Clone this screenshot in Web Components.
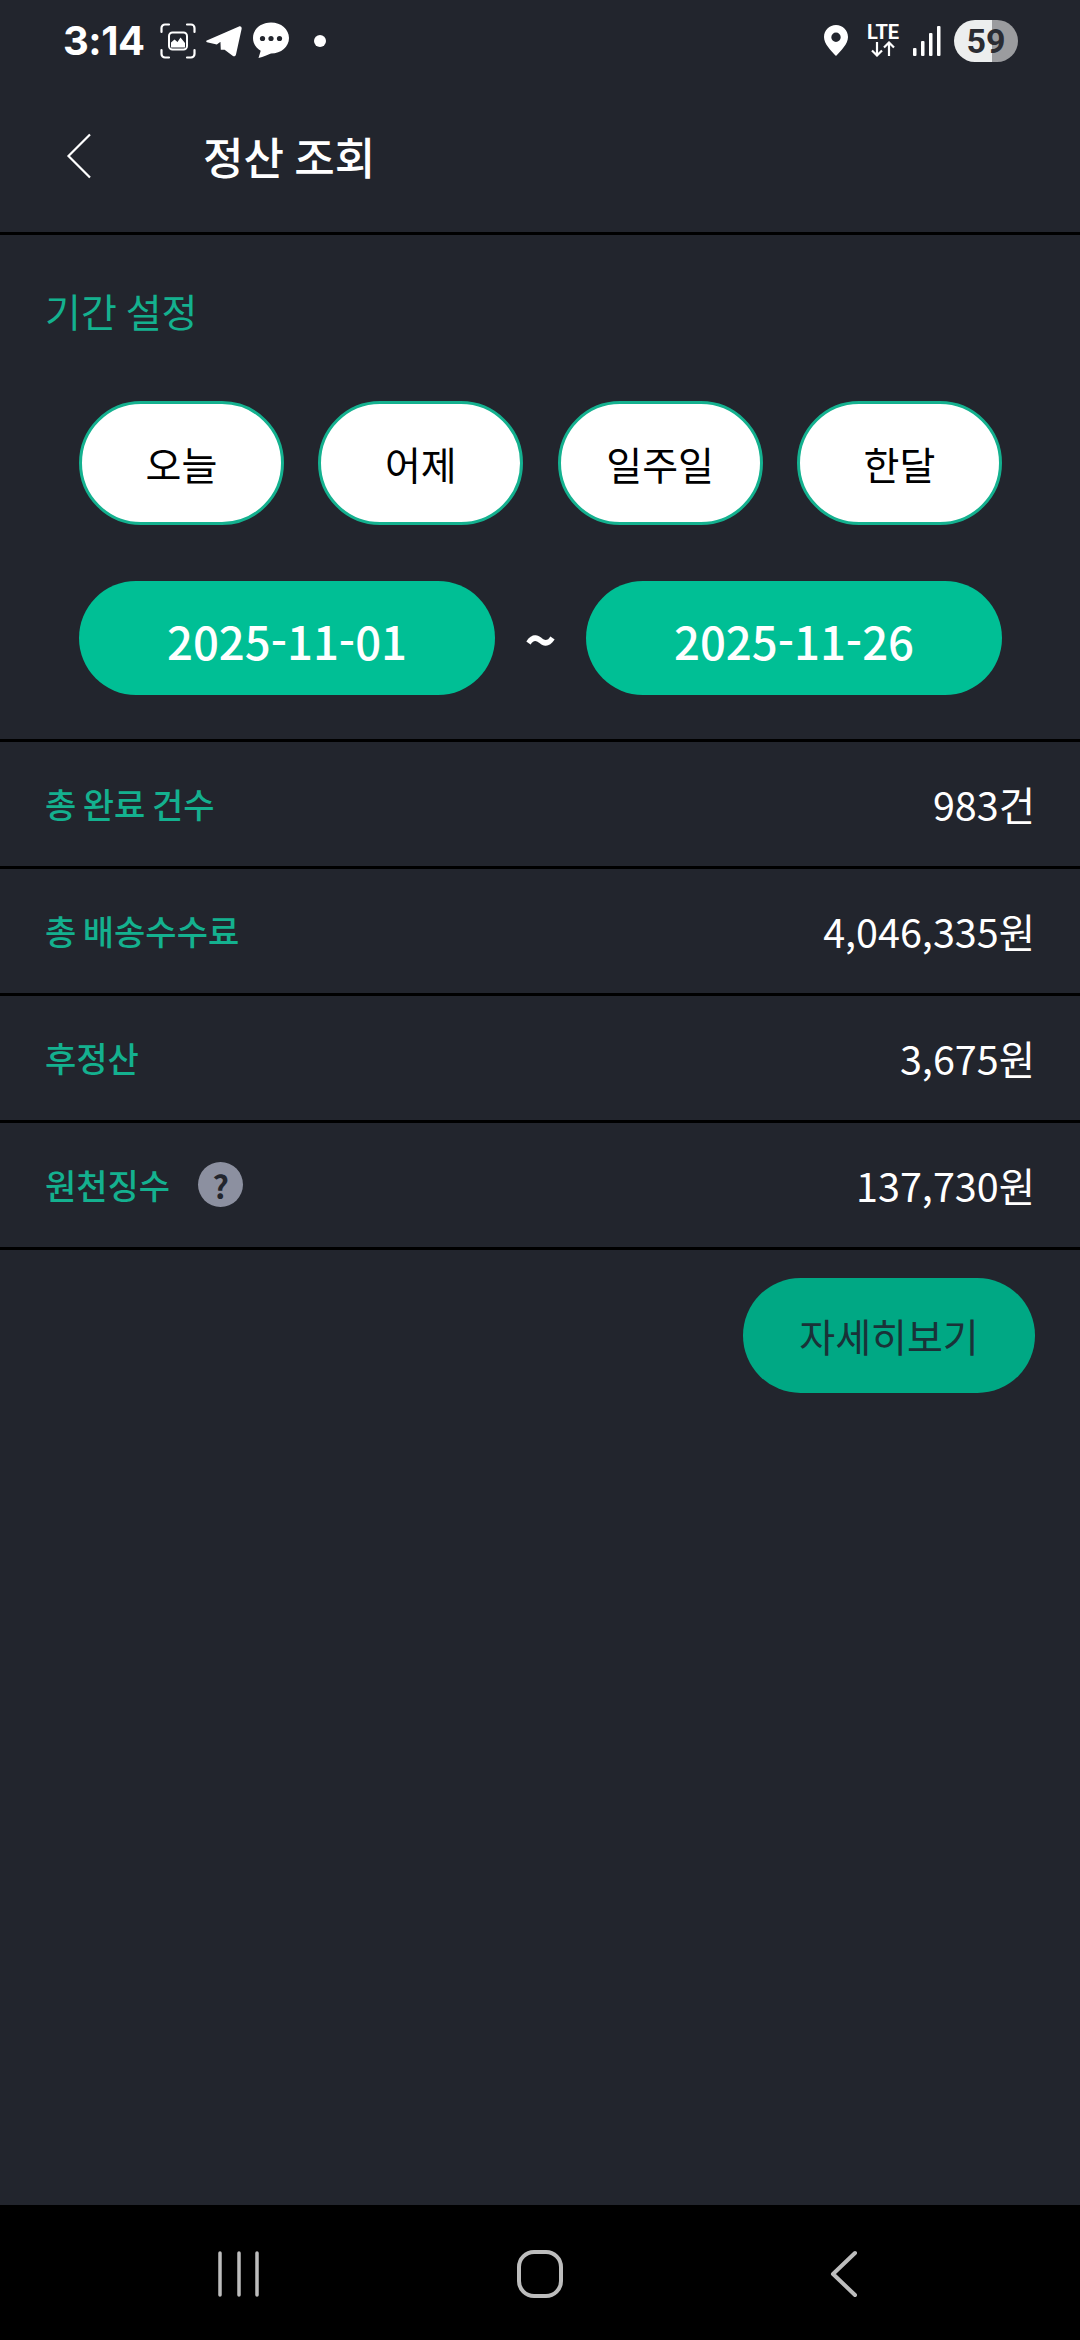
<!DOCTYPE html>
<html lang="ko">
<head>
<meta charset="utf-8">
<title>정산 조회</title>
<style>
  html, body { margin: 0; padding: 0; background: #22252d; }
  body { width: 1080px; height: 2340px; overflow: hidden; font-family: "Noto Sans CJK KR", "Noto Sans", sans-serif; }
</style>
</head>
<body>
<settlement-page>
  <status-bar slot="status"></status-bar>
  <app-header slot="header" title="정산 조회"></app-header>
  <period-filter slot="filter" heading="기간 설정" from="2025-11-01" to="2025-11-26">
    <chip-button>오늘</chip-button>
    <chip-button>어제</chip-button>
    <chip-button>일주일</chip-button>
    <chip-button>한달</chip-button>
  </period-filter>
  <summary-row slot="rows" label="총 완료 건수" value="983건"></summary-row>
  <summary-row slot="rows" label="총 배송수수료" value="4,046,335원"></summary-row>
  <summary-row slot="rows" label="후정산" value="3,675원"></summary-row>
  <summary-row slot="rows" label="원천징수" value="137,730원" help></summary-row>
  <detail-button slot="action">자세히보기</detail-button>
  <nav-bar slot="nav"></nav-bar>
</settlement-page>

<script>
// Page frame: stacks the bars and sections, the action button sits under the rows
class SettlementPage extends HTMLElement {
  constructor() {
    super();
    this.attachShadow({ mode: 'open' });
    this.shadowRoot.innerHTML = `
      <style>
        :host { display: flex; flex-direction: column; width: 1080px; height: 2340px; background: #22252d; }
        .action { display: flex; justify-content: flex-end; padding: 28px 45px 0 0; }
        .spacer { flex: 1; }
      </style>
      <slot name="status"></slot>
      <slot name="header"></slot>
      <slot name="filter"></slot>
      <slot name="rows"></slot>
      <div class="action"><slot name="action"></slot></div>
      <div class="spacer"></div>
      <slot name="nav"></slot>
    `;
  }
}

class StatusBar extends HTMLElement {
  constructor() {
    super();
    this.attachShadow({ mode: 'open' });
    this.shadowRoot.innerHTML = `
      <style>
        :host { display: flex; align-items: center; box-sizing: border-box; height: 78px; padding: 3px 62px 0 63px; color: #fff; }
        .time { font: 700 40px/1 Inter, Roboto, sans-serif; width: 81px; letter-spacing: -0.5px; }
        svg { display: block; flex: none; }
        .left { display: flex; align-items: center; }
        .right { display: flex; align-items: center; margin-left: auto; }
        .lte { display: flex; flex-direction: column; align-items: center; width: 34px; margin: 0 13px 0 18px; }
        .lte span { font: 700 20px/17px Roboto, sans-serif; }
        .battery {
          width: 64px; height: 42px; border-radius: 21px; margin-left: 13px;
          background: linear-gradient(90deg, #eceeee 0 59%, #9b9c9f 59% 100%);
          color: #2a2c33; font: 700 34px/42px Roboto, sans-serif; text-align: center;
        }
      </style>
      <div class="left">
        <span class="time">3:14</span>
        <svg width="36" height="36" viewBox="0 0 36 36" style="margin-left:16px" fill="none" stroke="#fff" stroke-width="2.200" stroke-linecap="round">
          <path d="M1.500 9V5a3.500 3.500 0 0 1 3.500-3.500h4M27 1.500h4A3.500 3.500 0 0 1 34.500 5v4M34.500 27v4a3.500 3.500 0 0 1-3.500 3.500h-4M9 34.500H5A3.500 3.500 0 0 1 1.500 31v-4"/>
          <rect x="9" y="9.500" width="18" height="17" rx="3.500" stroke-width="2"/>
          <path d="M11 24.500v-5l3.500-3 3 2.500 3-4.500 4.500 5.500v4.500z" fill="#fff" stroke="none"/>
        </svg>
        <svg width="36" height="32" viewBox="0 0 36 32" style="margin-left:10px" fill="#fff">
          <path d="M0.800 15.500 33 1.500c1.600-.6 3 .6 2.600 2.400L30 29.500c-.4 1.800-2 2.300-3.400 1.200l-8-6 -3.800 0 -.4-8.700L28.500 6.500 10.800 19.500 1 17.300c-1-.3-1.100-1.400-.2-1.800z"/>
        </svg>
        <svg width="38" height="37" viewBox="0 0 38 37" style="margin-left:10px">
          <path fill="#fff" d="M19 0.500C8.800 0.500 1 7.300 1 16c0 5.400 3 10 7.700 12.800L6.500 36c5-1 9.500-3.600 12.500-4.500 10.200 0 18-6.800 18-15.500S29.200.5 19 .5z"/>
          <circle cx="10.500" cy="16.500" r="2.600" fill="#22252d"/><circle cx="19" cy="16.500" r="2.600" fill="#22252d"/><circle cx="27.500" cy="16.500" r="2.600" fill="#22252d"/>
        </svg>
        <svg width="12" height="12" viewBox="0 0 12 12" style="margin-left:24px"><circle cx="6" cy="6" r="6" fill="#fff"/></svg>
      </div>
      <div class="right">
        <svg width="24" height="31" viewBox="0 0 24 31">
          <path fill="#fff" fill-rule="evenodd" d="M12 0C5.400 0 0 5.300 0 12c0 7 7 13.500 12 19 5-5.500 12-12 12-19C24 5.300 18.600 0 12 0zm0 7.500a4.700 4.700 0 1 1 0 9.400 4.700 4.700 0 0 1 0-9.400z"/>
        </svg>
        <div class="lte">
          <span>LTE</span>
          <svg width="26" height="16" viewBox="0 0 26 16" fill="none" stroke="#fff" stroke-width="2.200">
            <path d="M7 1v13M2 9.500 7 14.500l5-5M19 15V2M14 6.500 19 1.500l5 5"/>
          </svg>
        </div>
        <svg width="28" height="30" viewBox="0 0 28 30" fill="#fff">
          <rect x="0" y="22" width="3.500" height="8" rx="1"/><rect x="8" y="15" width="3.500" height="15" rx="1"/>
          <rect x="16" y="7" width="3.500" height="23" rx="1"/><rect x="24" y="0" width="3.500" height="30" rx="1"/>
        </svg>
        <div class="battery">59</div>
      </div>
    `;
  }
}

class AppHeader extends HTMLElement {
  constructor() {
    super();
    this.attachShadow({ mode: 'open' });
    this.shadowRoot.innerHTML = `
      <style>
        :host { display: flex; align-items: center; box-sizing: border-box; height: 157px; padding: 2px 0 0 66px; border-bottom: 3px solid #000; color: #fff; }
        svg { display: block; width: 26px; height: 46px; }
        h1 { margin: 0 0 0 111px; font: 500 44px/1 "Noto Sans CJK KR", sans-serif; word-spacing: -2px; }
      </style>
      <svg viewBox="0 0 26 46" fill="none" stroke="#fff" stroke-width="2.200"><path d="M24 1.500 2.500 23 24 44.500"/></svg>
      <h1>${this.getAttribute('title')}</h1>
    `;
  }
}

class ChipButton extends HTMLElement {
  constructor() {
    super();
    this.attachShadow({ mode: 'open' });
    this.shadowRoot.innerHTML = `
      <style>
        :host {
          display: flex; align-items: center; justify-content: center; box-sizing: border-box;
          width: 205px; height: 124px; border: 3px solid #14b18f; border-radius: 62px;
          background: #fff; color: #000; font: 400 39px/1 "Noto Sans CJK KR", sans-serif;
        }
      </style>
      <slot></slot>
    `;
  }
}

class DatePill extends HTMLElement {
  constructor() {
    super();
    this.attachShadow({ mode: 'open' });
    this.shadowRoot.innerHTML = `
      <style>
        :host {
          display: flex; align-items: center; justify-content: center; box-sizing: border-box;
          width: 416px; height: 114px; padding-top: 5px; border-radius: 57px; background: #00bf95;
          color: #fff; font: 500 45.500px/1 "Noto Sans CJK KR", sans-serif;
        }
      </style>
      <slot></slot>
    `;
  }
}

class PeriodFilter extends HTMLElement {
  constructor() {
    super();
    this.attachShadow({ mode: 'open' });
    this.shadowRoot.innerHTML = `
      <style>
        :host { display: block; box-sizing: border-box; height: 507px; padding: 0 78px 0 79px; border-bottom: 3px solid #000; }
        h2 { margin: 0 0 0 -34px; padding-top: 50px; height: 116px; font: 400 39px/50px "Noto Sans CJK KR", sans-serif; color: #14b18f; word-spacing: -2px; }
        .chips { display: flex; justify-content: space-between; }
        .dates { display: flex; align-items: center; justify-content: space-between; margin-top: 56px; }
        .tilde { color: #fff; font: 700 54px/1 "Noto Sans CJK KR", sans-serif; }
      </style>
      <h2>${this.getAttribute('heading')}</h2>
      <div class="chips"><slot></slot></div>
      <div class="dates">
        <date-pill>${this.getAttribute('from')}</date-pill>
        <span class="tilde">~</span>
        <date-pill>${this.getAttribute('to')}</date-pill>
      </div>
    `;
  }
}

class SummaryRow extends HTMLElement {
  constructor() {
    super();
    this.attachShadow({ mode: 'open' });
    const help = this.hasAttribute('help')
      ? `<span class="help">?</span>`
      : '';
    this.shadowRoot.innerHTML = `
      <style>
        :host { display: flex; align-items: center; box-sizing: border-box; height: 127px; padding: 0 45px 1px; border-bottom: 3px solid #000; }
        .label { font: 500 34px/1 "Noto Sans CJK KR", sans-serif; color: #14b18f; word-spacing: -3px; }
        .help {
          display: flex; align-items: center; justify-content: center;
          width: 45px; height: 45px; margin-left: 28px; border-radius: 50%;
          background: #8c90a0; color: #22252d; font: 700 32px/1 "Noto Sans CJK KR", sans-serif;
        }
        .value { margin-left: auto; font: 400 39.500px/1 "Noto Sans CJK KR", sans-serif; color: #fff; }
      </style>
      <span class="label">${this.getAttribute('label')}</span>${help}
      <span class="value">${this.getAttribute('value')}</span>
    `;
  }
}

class DetailButton extends HTMLElement {
  constructor() {
    super();
    this.attachShadow({ mode: 'open' });
    this.shadowRoot.innerHTML = `
      <style>
        :host {
          display: flex; align-items: center; justify-content: center;
          width: 292px; height: 115px; border-radius: 58px; background: #00a884;
          color: #1a3238; font: 400 39px/1 "Noto Sans CJK KR", sans-serif;
        }
      </style>
      <slot></slot>
    `;
  }
}

class NavBar extends HTMLElement {
  constructor() {
    super();
    this.attachShadow({ mode: 'open' });
    this.shadowRoot.innerHTML = `
      <style>
        :host { display: flex; align-items: center; justify-content: space-between; box-sizing: border-box; height: 135px; padding: 3px 212px 0 216px; background: #000; }
        svg { display: block; }
      </style>
      <svg width="46" height="46" viewBox="0 0 46 46" fill="none" stroke="#bdbdbd" stroke-width="3.500" stroke-linecap="round">
        <path d="M4 2v42M23 2v42M41 2v42"/>
      </svg>
      <svg width="46" height="48" viewBox="0 0 46 48" fill="none" stroke="#bdbdbd" stroke-width="4">
        <rect x="2" y="2" width="42" height="44" rx="15"/>
      </svg>
      <svg width="50" height="48" viewBox="0 0 50 48" fill="none" stroke="#bdbdbd" stroke-width="4" stroke-linecap="round" stroke-linejoin="round">
        <path d="M37 3 15 24l22 21"/>
      </svg>
    `;
  }
}

customElements.define('settlement-page', SettlementPage);
customElements.define('status-bar', StatusBar);
customElements.define('app-header', AppHeader);
customElements.define('chip-button', ChipButton);
customElements.define('date-pill', DatePill);
customElements.define('period-filter', PeriodFilter);
customElements.define('summary-row', SummaryRow);
customElements.define('detail-button', DetailButton);
customElements.define('nav-bar', NavBar);
</script>
</body>
</html>
